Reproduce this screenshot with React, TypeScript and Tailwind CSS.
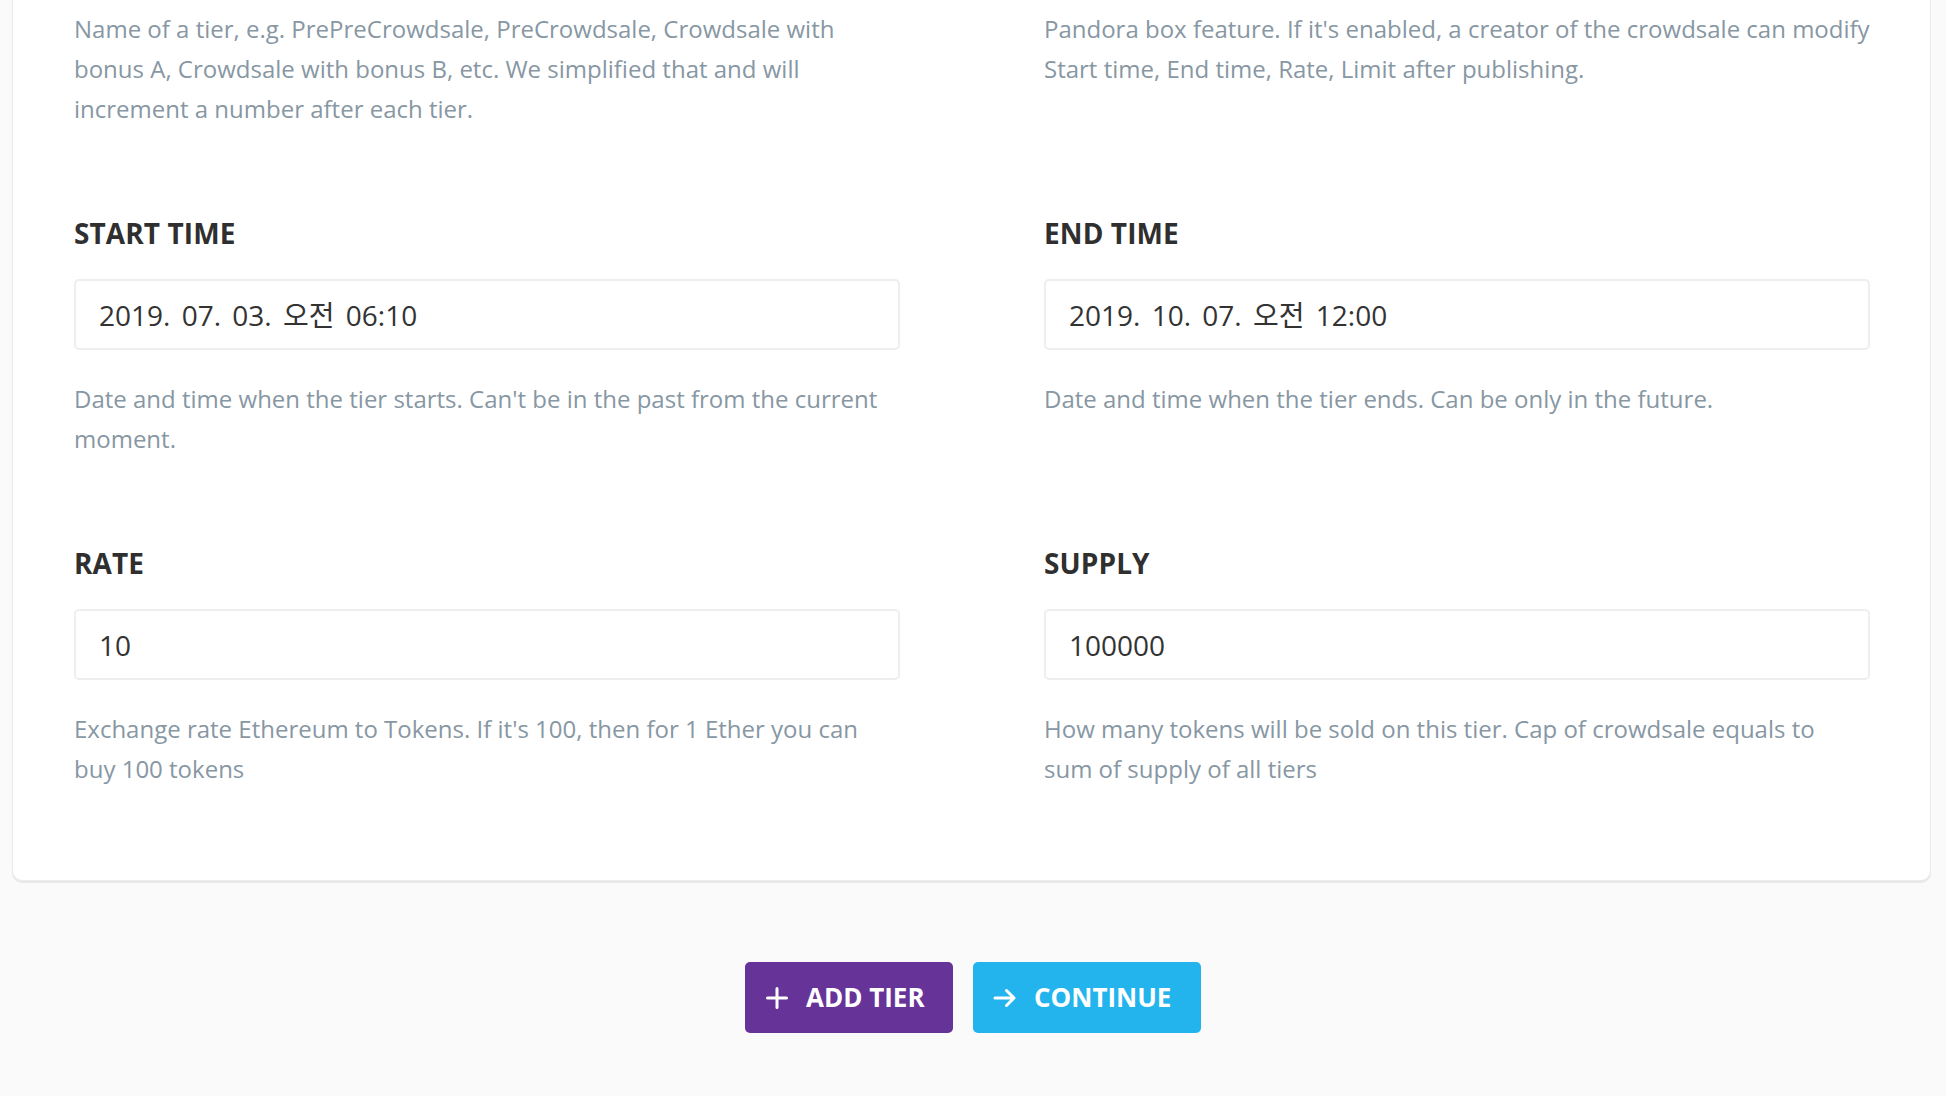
import React from "react";

const descCls = "text-[24px] leading-[40px] text-[#8797a3]";
const labelCls =
  "text-[28px] leading-[42px] font-bold text-[#2f2f2f] mb-[25px] tracking-[0.1px]";
const inputCls =
  "h-[71px] border-2 border-[#eeeeee] rounded-[5px] bg-white flex items-center pl-[23px] text-[28px] text-[#333333]";

function Field({
  label,
  value,
  desc,
  descExtra = "",
}: {
  label: string;
  value: string;
  desc: string;
  descExtra?: string;
}) {
  return (
    <div className="flex flex-col">
      <div className={labelCls}>{label}</div>
      <div className={inputCls}>
        <span className="[word-spacing:4px]">{value}</span>
      </div>
      <p className={descCls + " mt-[29px] " + descExtra}>{desc}</p>
    </div>
  );
}

function PlusIcon() {
  return (
    <svg width="24" height="24" viewBox="0 0 24 24" fill="none">
      <path
        d="M12 2.5v19M2.5 12h19"
        stroke="white"
        strokeWidth="3"
        strokeLinecap="round"
      />
    </svg>
  );
}

function ArrowIcon() {
  return (
    <svg width="24" height="24" viewBox="0 0 24 24" fill="none">
      <path
        d="M2 12h19M13.5 4.5L21 12l-7.5 7.5"
        stroke="white"
        strokeWidth="3"
        strokeLinecap="round"
        strokeLinejoin="round"
      />
    </svg>
  );
}

export default function App() {
  return (
    <div
      className="min-h-screen w-full bg-[#fafafa]"
      style={{ fontFamily: '"Open Sans", "Noto Sans CJK KR", sans-serif' }}
    >
      <div className="ml-[12px] w-[1919px] bg-white border-x border-b border-[#ebebeb] rounded-b-[10px] shadow-[0_2px_0_#e8e8e8] pl-[61px] pr-[60px] pt-[9px] pb-[91px]">
        <div className="grid grid-cols-2 gap-x-[144px] gap-y-[83px]">
          <p className={descCls}>
            Name of a tier, e.g. PrePreCrowdsale, PreCrowdsale, Crowdsale with
            bonus A, Crowdsale with bonus B, etc. We simplified that and will
            increment a number after each tier.
          </p>
          <p className={descCls}>
            Pandora box feature. If it's enabled, a creator of the crowdsale can
            modify Start time, End time, Rate, Limit after publishing.
          </p>
          <Field
            label="START TIME"
            value="2019. 07. 03. 오전 06:10"
            desc="Date and time when the tier starts. Can't be in the past from the current moment."
          />
          <Field
            label="END TIME"
            value="2019. 10. 07. 오전 12:00"
            desc="Date and time when the tier ends. Can be only in the future."
          />
          <Field
            label="RATE"
            value="10"
            desc="Exchange rate Ethereum to Tokens. If it's 100, then for 1 Ether you can buy 100 tokens"
          />
          <Field
            label="SUPPLY"
            value="100000"
            desc="How many tokens will be sold on this tier. Cap of crowdsale equals to sum of supply of all tiers"
            descExtra="pr-[4px]"
          />
        </div>
      </div>
      <div className="flex justify-center gap-[20px] mt-[81px]">
        <button className="h-[71px] w-[208px] rounded-[5px] bg-[#663399] flex items-center pl-[20px] text-white">
          <PlusIcon />
          <span className="ml-[17px] text-[26px] font-bold">ADD TIER</span>
        </button>
        <button className="h-[71px] w-[228px] rounded-[5px] bg-[#23b4ee] flex items-center pl-[20px] text-white">
          <ArrowIcon />
          <span className="ml-[17px] text-[26px] font-bold">CONTINUE</span>
        </button>
      </div>
    </div>
  );
}
